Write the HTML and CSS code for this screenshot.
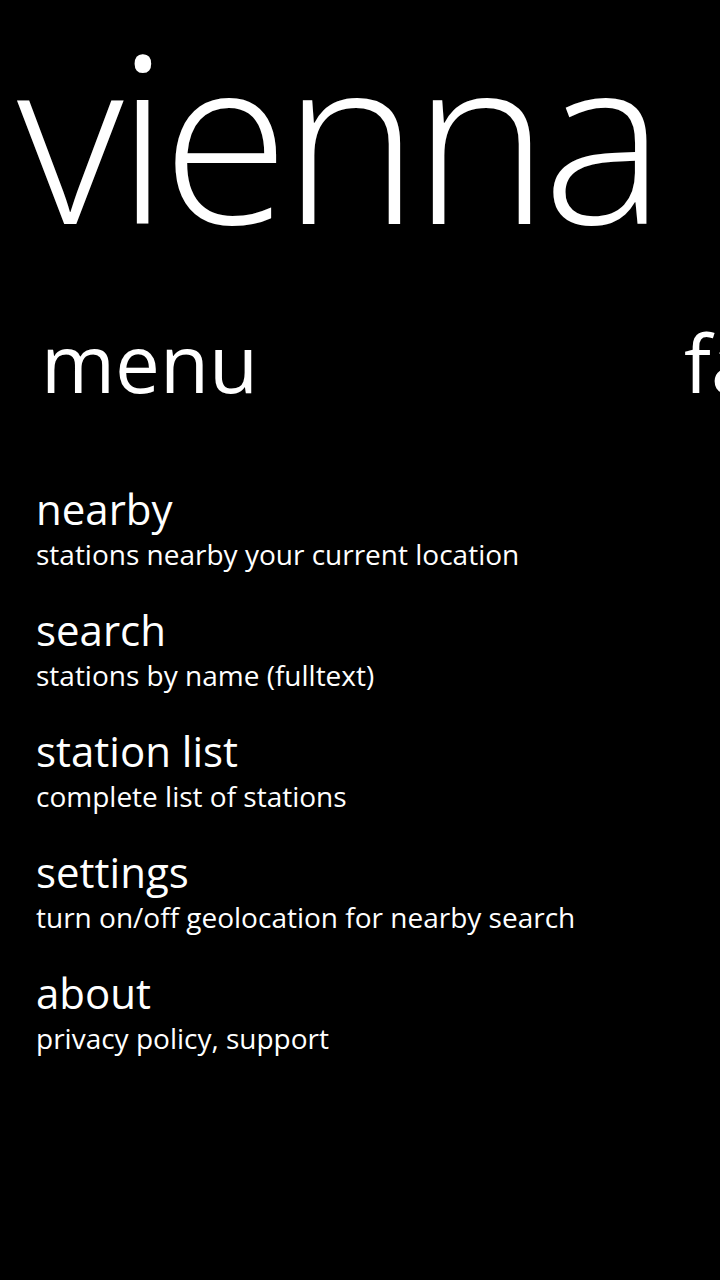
FILE: index.html
```html
<!DOCTYPE html>
<html>
<head>
<meta charset="utf-8">
<link rel="stylesheet" href="styles.css">
</head>
<body>
<div class="panorama">
  <h1 class="pano-title">vienna</h1>
  <div class="pano-items">
    <section class="pano-item">
      <h2 class="item-header">menu</h2>
      <ul class="menu">
        <li class="menu-entry"><span class="entry-title">nearby</span><span class="entry-sub">stations nearby your current location</span></li>
        <li class="menu-entry"><span class="entry-title">search</span><span class="entry-sub">stations by name (fulltext)</span></li>
        <li class="menu-entry"><span class="entry-title">station list</span><span class="entry-sub">complete list of stations</span></li>
        <li class="menu-entry"><span class="entry-title">settings</span><span class="entry-sub">turn on/off geolocation for nearby search</span></li>
        <li class="menu-entry"><span class="entry-title">about</span><span class="entry-sub">privacy policy, support</span></li>
      </ul>
    </section>
    <section class="pano-item">
      <h2 class="item-header">favorites</h2>
    </section>
  </div>
</div>
</body>
</html>
```
FILE: styles.css
```css
html, body {
  margin: 0;
  padding: 0;
  background: #000;
  width: 720px;
  height: 1280px;
  overflow: hidden;
}
body {
  color: #fff;
  font-family: "Open Sans", "Noto Sans", sans-serif;
}
.panorama {
  display: flex;
  flex-direction: column;
  width: 720px;
  overflow: hidden;
}
.pano-title {
  margin: 14px 0 0 0;
  padding-left: 17px;
  font-size: 232px;
  font-weight: 300;
  line-height: 240px;
  height: 240px;
  letter-spacing: -7px;
  white-space: nowrap;
}
.pano-items {
  display: flex;
}
.pano-item {
  flex: 0 0 643px;
  padding-left: 36px;
  box-sizing: border-box;
}
.item-header {
  margin: 58px 0 0 5px;
  font-size: 80px;
  font-weight: 400;
  line-height: 100px;
  white-space: nowrap;
}
.menu {
  list-style: none;
  margin: 74px 0 0 0;
  padding: 0;
  display: flex;
  flex-direction: column;
  gap: 31px;
}
.menu-entry {
  display: flex;
  flex-direction: column;
}
.entry-title {
  font-size: 42px;
  line-height: 46px;
}
.entry-sub {
  font-size: 28px;
  line-height: 44px;
}
```
